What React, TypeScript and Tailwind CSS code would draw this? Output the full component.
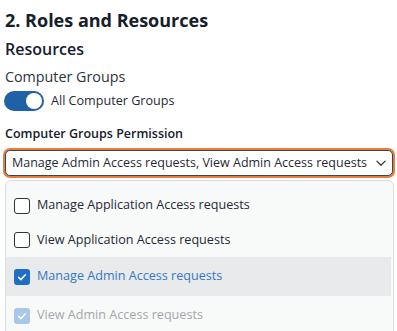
import { useState } from 'react';

interface Option {
  label: string;
  checked: boolean;
  disabled?: boolean;
  active?: boolean;
  height: string;
}

const options: Option[] = [
  { label: 'Manage Application Access requests', checked: false, height: 'h-[35px]' },
  { label: 'View Application Access requests', checked: false, height: 'h-[34px]' },
  { label: 'Manage Admin Access requests', checked: true, active: true, height: 'h-[39px]' },
  { label: 'View Admin Access requests', checked: true, disabled: true, height: 'h-[39px]' },
];

const CheckMark = () => (
  <svg viewBox="0 0 16 16" className="w-3 h-3" fill="none" stroke="white" strokeWidth="2" strokeLinecap="round" strokeLinejoin="round">
    <path d="M3.5 8.5l3 3 6-6.5" />
  </svg>
);

const App = () => {
  const [on] = useState(true);

  return (
    <div className="w-[397px] h-[331px] overflow-hidden bg-white font-['Open_Sans',sans-serif] text-[#1f2a36]">
      <div className="px-[5px] pt-[6px]">
        <h2 className="text-[18px] leading-[28px] font-bold text-[#15202c]">2. Roles and Resources</h2>
        <h3 className="mt-[4px] text-[16px] leading-[22px] font-semibold text-[#15202c]">Resources</h3>
        <div className="mt-[7px] text-[14.3px] leading-[20px] text-[#2b333b]">Computer Groups</div>
        <div className="mt-[4px] h-[20px] flex items-center gap-[7px] -ml-px">
          <div className={`w-[40px] h-[20px] rounded-full flex items-center px-[2px] ${on ? 'bg-[#2060a6] justify-end' : 'bg-gray-300 justify-start'}`}>
            <div className="w-[16px] h-[16px] rounded-full bg-white" />
          </div>
          <span className="text-[12.6px] text-[#1f2a36]">All Computer Groups</span>
        </div>
        <div className="mt-[14px] text-[12.5px] leading-[18px] font-semibold text-[#15202c]">Computer Groups Permission</div>
      </div>

      <div className="pl-[5px] pr-[4px] mt-[7px]">
        <div className="h-[26px] rounded-[5px] border border-[#2f4a5a] ring-2 ring-[#ec7c3a] flex items-center justify-between pl-[6px] pr-[5px] text-[12.5px] text-[#1f2a36] bg-white">
          <span className="whitespace-nowrap">Manage Admin Access requests, View Admin Access requests</span>
          <svg viewBox="0 0 16 16" className="w-[12px] h-[12px]" fill="none" stroke="#2b333b" strokeWidth="1.6" strokeLinecap="round" strokeLinejoin="round">
            <path d="M2.5 5.5L8 11l5.5-5.5" />
          </svg>
        </div>
      </div>

      <div className="ml-[5px] mr-[3px] mt-[4px] border border-[#dadde0] rounded-t-[6px] bg-[#f8f9f9] pt-[7px] pr-[2px]">
        {options.map((opt) => (
          <div
            key={opt.label}
            className={`${opt.height} flex items-center gap-[7px] pl-[8px] text-[12.6px] ${opt.active ? 'bg-[#e9eaeb]' : ''} ${
              opt.disabled ? 'text-[#a3a7ab]' : opt.checked ? 'text-[#3477c4]' : 'text-[#1f2a36]'
            }`}
          >
            <span
              className={`w-[16px] h-[16px] rounded-[3px] flex items-center justify-center ${
                opt.checked
                  ? opt.disabled
                    ? 'bg-[#a9c7e8]'
                    : 'bg-[#1f6ec4]'
                  : 'border-[1.5px] border-[#2b333b] bg-white'
              }`}
            >
              {opt.checked && <CheckMark />}
            </span>
            <span className="whitespace-nowrap">{opt.label}</span>
          </div>
        ))}
      </div>
    </div>
  );
};

export default App;
